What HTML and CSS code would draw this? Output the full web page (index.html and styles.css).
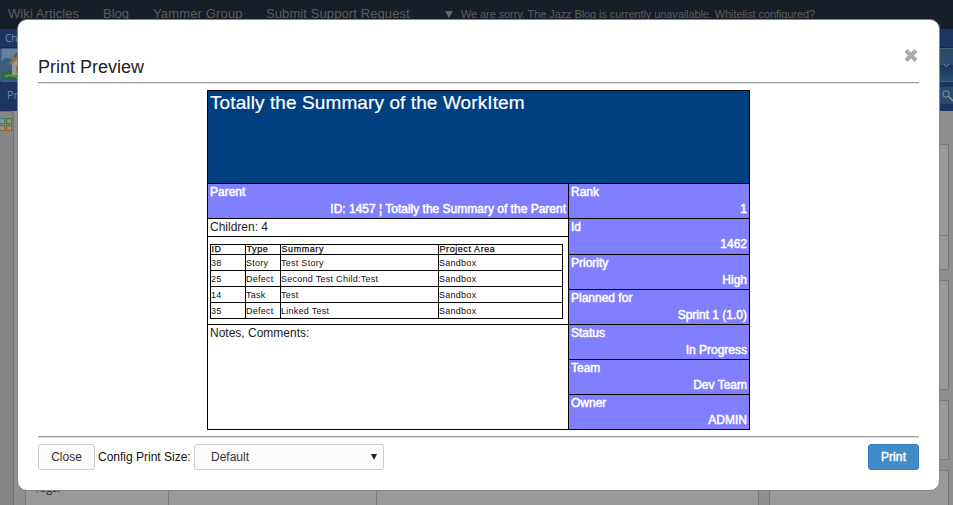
FILE: index.html
```html
<!DOCTYPE html>
<html lang="en">
<head>
<meta charset="utf-8">
<title>Print Preview</title>
<link rel="stylesheet" href="styles.css">
</head>
<body>
<div class="page">
  <header class="topbar">
    <span class="wiki">Wiki Articles</span><span class="blog">Blog</span><span class="yammer">Yammer Group</span><span class="support">Submit Support Request</span><svg class="arrow" width="8" height="7" viewBox="0 0 8 7"><path d="M0 0H8L4 7Z" fill="#666"/></svg><span class="notice">We are sorry. The Jazz Blog is currently unavailable. Whitelist configured?</span>
  </header>
  <div class="crumb">Cha</div>
  <div class="banner">
    <svg class="home" width="32" height="34" viewBox="0 0 32 34">
      <rect width="32" height="34" rx="2" fill="#3d5e80"/>
      <path d="M1 14Q5 8 10 11L17 4V1H2Z" fill="#66809a"/>
      <path d="M1 25Q9 20 18 24V32H3Q1 32 1 30Z" fill="#2b6843"/>
      <path d="M5 29Q9 25 19 30" fill="none" stroke="#5b925b" stroke-width="2"/>
      <path d="M12 15L20 8V27H12Z" fill="#999a98"/>
      <path d="M10 16L20 7M13 7V13" stroke="#8b714d" stroke-width="3"/>
      <path d="M16 18H20V25H16Z" fill="#936d43"/>
    </svg>
    <div class="drop"><svg width="7" height="5" viewBox="0 0 7 5"><path d="M.5 .8L3.5 3.8L6.500 .8" fill="none" stroke="#8795a0"/></svg></div>
  </div>
  <div class="menu"><span>Pro</span>
    <div class="search"><svg width="12" height="12" viewBox="0 0 12 12"><circle cx="4" cy="4" r="3.200" fill="none" stroke="#8996a2"/><path d="M6.500 6.500L11 11" stroke="#8996a2" stroke-width="1.600"/></svg></div>
  </div>
  <div class="workspace">
    <aside class="rail">
      <svg width="13" height="14" viewBox="0 0 13 14"><g fill="#8f9690" stroke-width="1.200"><rect x="-.4" y=".6" width="5" height="5" stroke="#328088"/><rect x="6.600" y=".6" width="5" height="5" stroke="#4e7f22"/><rect x="-.4" y="7.600" width="5" height="5" stroke="#80702d"/><rect x="6.600" y="7.600" width="5" height="5" stroke="#a55d1e"/></g></svg>
    </aside>
    <div class="form"><div class="labels">Tags:</div><div class="values"></div><div class="rest"></div></div>
    <div class="side">
      <div class="box first"><div class="split"></div></div>
      <div class="box second"></div>
      <div class="box third"></div>
      <div class="box last"></div>
    </div>
  </div>
</div>

<section class="dialog">
  <div class="heading"><h1>Print Preview</h1>
    <svg class="dismiss" width="14" height="13" viewBox="0 0 14 13"><path d="M2 1.500L12 11.500M12 1.500L2 11.500" stroke="#aaa" stroke-width="4"/></svg>
  </div>
  <hr>
  <div class="card">
    <div class="title"><span>Totally the Summary of the WorkItem</span></div>
    <div class="columns">
      <div class="left">
        <div class="field parent"><b>Parent</b><b class="value">ID: 1457 ¦ Totally the Summary of the Parent</b></div>
        <div class="count">Children: 4</div>
        <div class="children">
          <table>
            <tr><th class="id">ID</th><th class="type">Type</th><th class="summary">Summary</th><th>Project Area</th></tr>
            <tr><td>38</td><td>Story</td><td>Test Story</td><td>Sandbox</td></tr>
            <tr><td>25</td><td>Defect</td><td>Second Test Child:Test</td><td>Sandbox</td></tr>
            <tr><td>14</td><td>Task</td><td>Test</td><td>Sandbox</td></tr>
            <tr><td>35</td><td>Defect</td><td>Linked Test</td><td>Sandbox</td></tr>
          </table>
        </div>
        <div class="notes">Notes, Comments:</div>
      </div>
      <div class="right">
        <div class="field"><b>Rank</b><b class="value">1</b></div>
        <div class="field tall"><b>Id</b><b class="value">1462</b></div>
        <div class="field"><b>Priority</b><b class="value">High</b></div>
        <div class="field"><b>Planned for</b><b class="value">Sprint 1 (1.0)</b></div>
        <div class="field"><b>Status</b><b class="value">In Progress</b></div>
        <div class="field"><b>Team</b><b class="value">Dev Team</b></div>
        <div class="field"><b>Owner</b><b class="value">ADMIN</b></div>
      </div>
    </div>
  </div>
  <hr class="lower">
  <div class="actions">
    <button class="close">Close</button>
    <span class="size">Config Print Size:</span>
    <div class="select"><span>Default</span><svg width="6" height="6" viewBox="0 0 6 6"><path d="M0 0H6L3 6Z" fill="#222"/></svg></div>
    <button class="print">Print</button>
  </div>
</section>
</body>
</html>
```
FILE: styles.css
```css
* { box-sizing: border-box; }
body { margin: 0; height: 505px; overflow: hidden; position: relative; font-family: "Liberation Sans", Arial, sans-serif; font-size: 12px; color: #222; background: #8f8f8f; }
.page { height: 505px; display: flex; flex-direction: column; overflow: hidden; }
.topbar { height: 29px; flex: none; background: #161f27; color: #5c5c5c; display: flex; align-items: baseline; padding: 6px 0 0 8px; font-size: 13px; line-height: 15px; white-space: nowrap; }
.wiki { width: 95px; letter-spacing: .08px; }
.blog { width: 50px; }
.yammer { width: 113px; letter-spacing: .15px; }
.support { width: 179px; letter-spacing: .1px; }
.arrow { margin-right: 8px; }
.notice { font-size: 11px; letter-spacing: -.09px; }
.crumb { height: 19px; flex: none; background: #1e3563; border-bottom: 1px solid #14264a; padding: 3px 0 0 5px; font: 10px/12px "Open Sans", sans-serif; color: #77889f; }
.banner { height: 34px; flex: none; background: #1c3259; display: flex; justify-content: space-between; }
.home { margin-left: 0; }
.drop { width: 14px; height: 34px; padding: 14px 0 0 4px; border: solid #416273; border-width: 1px 0; background: linear-gradient(#2c4b6a 0 50%, #19365a 50%, #284e6c); }
.drop svg, .search svg, .rail svg { display: block; }
.menu { height: 29px; flex: none; background: #1e3563; display: flex; justify-content: space-between; padding: 5px 0 0 7px; font: 11px/15px "Open Sans", sans-serif; color: #598da4; }
.search { width: 14px; height: 17px; background: #2a4b6b; padding: 3px 0 0 3px; }
.workspace { flex: 1; display: flex; background: #8f8f8f; }
.rail { width: 14px; background: #858585; border: solid #727272; border-width: 1px 1px 0 0; border-radius: 0 4px 0 0; padding-top: 6px; }
.form { width: 734px; margin: 33px 0 0 11px; border: 1px solid #7a7a7a; border-bottom: 0; background: #999; display: flex; }
.labels { width: 142px; padding: 336px 0 0 8px; font: 11px/14px "Open Sans", sans-serif; }
.values { width: 209px; border: solid #7a7a7a; border-width: 0 1px; }
.side { width: 180px; margin: 33px 0 0 10px; display: flex; flex-direction: column; gap: 10px; }
.box { background: #999; border: 1px solid #7a7a7a; }
.first { height: 126px; }
.split { height: 91px; border-bottom: 1px solid #7a7a7a; }
.second { height: 110px; }
.third { height: 60px; }
.last { flex: 1; border-bottom: 0; }

.dialog { position: absolute; left: 17px; top: 19px; width: 923px; height: 472px; border: 1px solid #858585; border-radius: 10px; background: #fff; padding: 28px 20px 0; }
.heading { display: flex; justify-content: space-between; height: 34px; }
h1 { font-size: 18px; line-height: 20px; font-weight: 400; margin: 9px 0 0; color: #222; }
.dismiss { margin: 1px 1px 0 0; }
hr { height: 2px; border: 0; border-top: 1px solid #999; margin: 0; background: #e4e4e4; }
.card { width: 543px; height: 340px; margin: 6px 0 0 169px; border: 1px solid #000; }
.title { height: 93px; background: #004080; border-bottom: 1px solid #000; color: #fff; font-size: 19px; letter-spacing: .1px; line-height: 20px; padding: 2px; -webkit-text-stroke: .2px #fff; }
.columns { display: flex; height: 245px; }
.left { width: 361px; border-right: 1px solid #000; }
.right { flex: 1; }
.field { height: 35px; background: #8080ff; border-bottom: 1px solid #000; color: #fff; font-size: 12px; line-height: 17px; padding: 0 2px; display: flex; flex-direction: column; white-space: nowrap; }
.field b { font-weight: 400; -webkit-text-stroke: .5px #fff; }
.tall { height: 36px; }
.right .field:last-child { height: 34px; border-bottom: 0; }
.value { align-self: flex-end; }
.count { height: 18px; line-height: 17px; border-bottom: 1px solid #000; padding-left: 2px; }
.children { height: 88px; border-bottom: 1px solid #000; padding: 7px 0 0 2px; }
.notes { padding-left: 2px; line-height: 17px; }
table { width: 353px; table-layout: fixed; border-collapse: collapse; font-size: 9px; line-height: 9px; letter-spacing: .27px; color: #111; }
th, td { border: 1px solid #000; padding: 1px 0 0; height: 16px; text-align: left; }
th { height: 10px; padding: 0 0 0 .5px; font-weight: 400; -webkit-text-stroke: .25px #111; letter-spacing: .57px; }
.id, .type { width: 35px; }
.summary { width: 158px; }
.lower { margin-top: 6px; }
.actions { display: flex; align-items: center; height: 26px; margin-top: 6px; }
button, .select { height: 26px; border: 1px solid #ccc; border-radius: 3px; background: #fbfbfb; font: 12px "Liberation Sans", Arial, sans-serif; color: #333; padding: 0; }
.close { width: 57px; }
.size { width: 96px; margin-left: 3px; white-space: nowrap; color: #111; }
.select { width: 190px; display: flex; align-items: center; justify-content: space-between; padding: 0 6px 0 16px; }
.print { width: 51px; margin-left: auto; background: #428bca; border-color: #357ebd; color: #fff; -webkit-text-stroke: .45px #fff; letter-spacing: .1px; }
```
